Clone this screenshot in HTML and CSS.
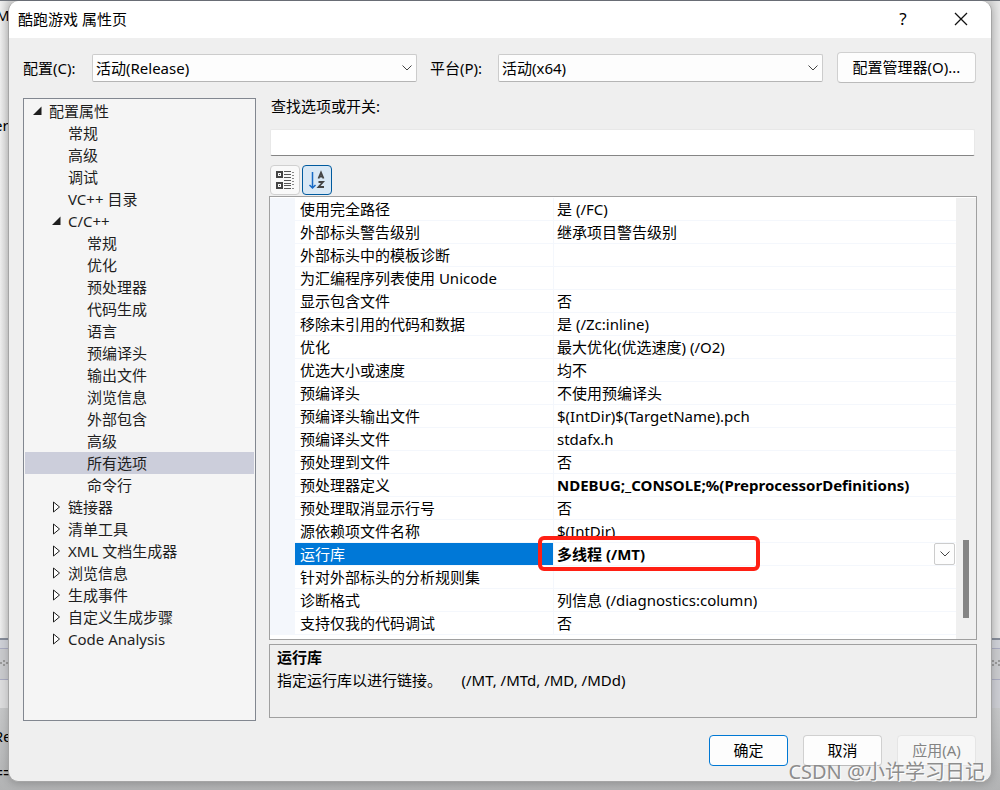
FILE: index.html
```html
<!DOCTYPE html>
<html lang="zh-CN">
<head>
    <meta charset="UTF-8">
    <meta name="viewport" content="width=device-width, initial-scale=1.0">
    <title>酷跑游戏 属性页</title>
    <link rel="stylesheet" href="styles.css">
</head>
<body>
    <!-- IDE window behind the dialog -->
    <div class="backdrop" aria-hidden="true">
        <div class="backdrop-editor"><span class="line-m">M</span><span>er</span></div>
        <div class="backdrop-tabs"></div>
        <div class="backdrop-grip">
            <svg width="9" height="8" viewBox="0 0 9 8"><path d="M0 3h2v2H0zM3 1h2v2H3zM3 5h2v2H3zM6 3h2v2H6z"/></svg>
            <svg width="9" height="8" viewBox="0 0 9 8"><path d="M1 1h2v2H1zM1 5h2v2H1zM4 3h2v2H4zM7 1h2v2H7zM7 5h2v2H7z"/></svg>
        </div>
        <div class="backdrop-bar"></div>
        <div class="backdrop-output"><span>Re</span><span>==</span></div>
    </div>

    <div class="dialog" role="dialog" aria-labelledby="dialog-title">
        <header class="title-bar">
            <h1 id="dialog-title">酷跑游戏 属性页</h1>
            <button class="title-btn help" aria-label="帮助">?</button>
            <button class="title-btn" aria-label="关闭">
                <svg width="14" height="14" viewBox="0 0 14 14"><path d="M1 1l12 12M13 1L1 13" stroke="#111" stroke-width="1.3" fill="none"/></svg>
            </button>
        </header>

        <div class="config-row">
            <label for="config">配置(C):</label>
            <span class="combo">
                <select id="config"><option>活动(Release)</option></select>
                <svg class="chevron" width="10" height="6" viewBox="0 0 10 6"><path d="M.5.5L5 5 9.5.5"/></svg>
            </span>
            <label for="platform">平台(P):</label>
            <span class="combo">
                <select id="platform"><option>活动(x64)</option></select>
                <svg class="chevron" width="10" height="6" viewBox="0 0 10 6"><path d="M.5.5L5 5 9.5.5"/></svg>
            </span>
            <button class="btn manager-btn">配置管理器(O)...</button>
        </div>

        <main class="content">
            <ul class="tree">
                <li class="level-0"><svg class="arrow" viewBox="0 0 9 12"><path class="open" d="M8.5 1.5V10H0z"/></svg>配置属性</li>
                <li class="level-1">常规</li>
                <li class="level-1">高级</li>
                <li class="level-1">调试</li>
                <li class="level-1">VC++ 目录</li>
                <li class="level-1"><svg class="arrow" viewBox="0 0 9 12"><path class="open" d="M8.5 1.5V10H0z"/></svg>C/C++</li>
                <li class="level-2">常规</li>
                <li class="level-2">优化</li>
                <li class="level-2">预处理器</li>
                <li class="level-2">代码生成</li>
                <li class="level-2">语言</li>
                <li class="level-2">预编译头</li>
                <li class="level-2">输出文件</li>
                <li class="level-2">浏览信息</li>
                <li class="level-2">外部包含</li>
                <li class="level-2">高级</li>
                <li class="level-2 selected">所有选项</li>
                <li class="level-2">命令行</li>
                <li class="level-1"><svg class="arrow" viewBox="0 0 9 12"><path class="closed" d="M1.500 1v10L7.500 6z"/></svg>链接器</li>
                <li class="level-1"><svg class="arrow" viewBox="0 0 9 12"><path class="closed" d="M1.500 1v10L7.500 6z"/></svg>清单工具</li>
                <li class="level-1"><svg class="arrow" viewBox="0 0 9 12"><path class="closed" d="M1.500 1v10L7.500 6z"/></svg>XML 文档生成器</li>
                <li class="level-1"><svg class="arrow" viewBox="0 0 9 12"><path class="closed" d="M1.500 1v10L7.500 6z"/></svg>浏览信息</li>
                <li class="level-1"><svg class="arrow" viewBox="0 0 9 12"><path class="closed" d="M1.500 1v10L7.500 6z"/></svg>生成事件</li>
                <li class="level-1"><svg class="arrow" viewBox="0 0 9 12"><path class="closed" d="M1.500 1v10L7.500 6z"/></svg>自定义生成步骤</li>
                <li class="level-1"><svg class="arrow" viewBox="0 0 9 12"><path class="closed" d="M1.500 1v10L7.500 6z"/></svg>Code Analysis</li>
            </ul>

            <section class="options">
                <label class="search-label" for="search">查找选项或开关:</label>
                <input class="search" id="search" type="text">

                <div class="toolbar">
                    <button class="tool-btn" aria-label="按类别">
                        <svg width="20" height="20" viewBox="0 0 20 20" fill="none">
                            <path d="M2 2h5v5H2zM2 13h5v5H2z" stroke="#444" stroke-width="2"/>
                            <path d="M4 4h1v1H4zM4 15h1v1H4z" fill="#444"/>
                            <path d="M9 1.5h7M9 4.500h7M9 7.500h7M9 10.500h7M9 13.500h7M9 15.500h7M9 18.500h7" stroke="#555"/>
                            <path d="M17 2.500h2M17 5.500h2M17 8.500h2M17 11.500h2M17 14.500h2M17 18.500h2" stroke="#888"/>
                        </svg>
                    </button>
                    <button class="tool-btn active" aria-label="按字母顺序">
                        <svg width="20" height="20" viewBox="0 0 20 20" fill="none">
                            <path d="M5.500 2v16M2.500 15l3 3 3-3" stroke="#1668c4" stroke-width="1.500"/>
                            <path d="M11.500 8.500L14 2.500l2.500 6M12.300 6.500h3.400M11.500 12h4.500l-4.500 5h5.500" stroke="#444" stroke-width="1.800"/>
                        </svg>
                    </button>
                </div>

                <div class="grid-box">
                    <table class="property-grid">
                        <tr><th scope="row">使用完全路径</th><td>是 (/FC)</td></tr>
                        <tr><th scope="row">外部标头警告级别</th><td>继承项目警告级别</td></tr>
                        <tr><th scope="row">外部标头中的模板诊断</th><td></td></tr>
                        <tr><th scope="row">为汇编程序列表使用 Unicode</th><td></td></tr>
                        <tr><th scope="row">显示包含文件</th><td>否</td></tr>
                        <tr><th scope="row">移除未引用的代码和数据</th><td>是 (/Zc:inline)</td></tr>
                        <tr><th scope="row">优化</th><td>最大优化(优选速度) (/O2)</td></tr>
                        <tr><th scope="row">优选大小或速度</th><td>均不</td></tr>
                        <tr><th scope="row">预编译头</th><td>不使用预编译头</td></tr>
                        <tr><th scope="row">预编译头输出文件</th><td>$(IntDir)$(TargetName).pch</td></tr>
                        <tr><th scope="row">预编译头文件</th><td>stdafx.h</td></tr>
                        <tr><th scope="row">预处理到文件</th><td>否</td></tr>
                        <tr><th scope="row">预处理器定义</th><td class="modified">NDEBUG;_CONSOLE;%(PreprocessorDefinitions)</td></tr>
                        <tr><th scope="row">预处理取消显示行号</th><td>否</td></tr>
                        <tr><th scope="row">源依赖项文件名称</th><td>$(IntDir)</td></tr>
                        <tr class="current">
                            <th scope="row">运行库</th>
                            <td class="modified">
                                <div class="value-editor">
                                    <span>多线程 (/MT)</span>
                                    <button class="drop-btn" aria-label="展开">
                                        <svg class="chevron" width="10" height="6" viewBox="0 0 10 6"><path d="M.5.5L5 5 9.5.5"/></svg>
                                    </button>
                                </div>
                                <div class="highlight"></div>
                            </td>
                        </tr>
                        <tr><th scope="row">针对外部标头的分析规则集</th><td></td></tr>
                        <tr><th scope="row">诊断格式</th><td>列信息 (/diagnostics:column)</td></tr>
                        <tr><th scope="row">支持仅我的代码调试</th><td>否</td></tr>
                    </table>
                    <div class="scrollbar"><div class="thumb"></div></div>
                </div>

                <div class="description">
                    <h2>运行库</h2>
                    <p>指定运行库以进行链接。 &nbsp; &nbsp; (/MT, /MTd, /MD, /MDd)</p>
                </div>
            </section>
        </main>

        <footer class="actions">
            <button class="btn primary">确定</button>
            <button class="btn">取消</button>
            <button class="btn" disabled>应用(A)</button>
        </footer>
        <div class="watermark">CSDN @小许学习日记</div>
    </div>
</body>
</html>
```

FILE: styles.css
```css
* {
    box-sizing: border-box;
}

body {
    margin: 0;
    min-height: 100vh;
    padding: 1px 8px 8px;
    display: flex;
    position: relative;
    font-family: "Noto Sans", "Noto Sans CJK SC", sans-serif;
    font-size: 15px;
    line-height: 22px;
    color: #000;
    background: #b4b5b6;
}

button,
input,
select {
    font: inherit;
    color: inherit;
    margin: 0;
}

h1,
h2,
p,
ul {
    margin: 0;
    padding: 0;
    font-size: inherit;
    font-weight: normal;
}

/* Window behind the dialog */
.backdrop {
    position: absolute;
    inset: 0;
    overflow: hidden;
    display: flex;
    flex-direction: column;
    border-top: 1px solid #70747c;
}

.backdrop-editor {
    flex: 1;
    display: flex;
    flex-direction: column;
    gap: 88px;
    padding-top: 3px;
    border-bottom: 2px solid #858b98;
    background: linear-gradient(90deg, #eee, #d4d4d4 9px, #d4d4d4 calc(100% - 9px), #e6e6e6);
}

.backdrop-editor .line-m {
    margin-left: -4px;
}

.backdrop-editor span:last-child {
    margin-left: -6px;
}

.backdrop-tabs {
    height: 9px;
    background: #ced0d6;
    border-bottom: 1px solid #a9abc0;
}

.backdrop-grip {
    height: 31px;
    display: flex;
    justify-content: space-between;
    align-items: flex-start;
    padding-top: 10px;
    fill: #999;
    background: #c9cacd;
    border-bottom: 1px solid #a9abc0;
}

.backdrop-bar {
    height: 28px;
    background: linear-gradient(90deg, #dcdcdd 50%, #cbccd2 50%);
}

.backdrop-output {
    height: 82px;
    padding-top: 20px;
    display: flex;
    flex-direction: column;
    gap: 14px;
    font-family: "Liberation Mono", monospace;
    background: linear-gradient(#c6c7c8, #b2b3b4);
}

.backdrop-output span {
    margin-left: -6px;
}

/* Dialog */
.dialog {
    position: relative;
    flex: 1;
    display: flex;
    flex-direction: column;
    padding-bottom: 15px;
    border: 1px solid #a5a5a5;
    border-top: none;
    border-radius: 10px;
    background: #efefef;
    box-shadow: 0 2px 8px rgba(0, 0, 0, 0.2);
}

.title-bar {
    height: 37px;
    display: flex;
    align-items: center;
    padding: 0 1px 2px 9px;
    background: #fff;
    border-radius: 10px 10px 0 0;
}

.title-bar h1 {
    flex: 1;
}

.title-btn {
    width: 58px;
    height: 35px;
    padding: 0;
    border: none;
    background: none;
    display: grid;
    place-items: center;
}

.title-btn.help {
    font-size: 17px;
}

.config-row {
    display: flex;
    align-items: center;
    padding: 14px 15px 0 14px;
}

.config-row label {
    width: 69px;
}

.config-row .combo + label {
    width: 68px;
}

.combo {
    flex: 1;
    display: grid;
    align-items: center;
    margin-right: 13px;
}

.combo select {
    grid-area: 1 / 1;
    width: 100%;
    height: 28px;
    padding: 0 3px;
    appearance: none;
    border: 1px solid #ccc;
    border-bottom-color: #b5b5b5;
    border-radius: 2px;
    background: #fdfdfd;
}

.combo .chevron {
    grid-area: 1 / 1;
    justify-self: end;
    margin-right: 5px;
    pointer-events: none;
}

.chevron path {
    fill: none;
    stroke: #444;
}

.btn {
    width: 79px;
    height: 31px;
    padding: 0 0 2px;
    border: 1px solid #d0d0d0;
    border-bottom-color: #bbb;
    border-radius: 4px;
    background: #fdfdfd;
}

.btn.primary {
    border-color: #0078d4;
}

.btn:disabled {
    color: #838383;
    border-color: #e5e5e5;
    background: #f7f7f7;
}

.manager-btn {
    width: 139px;
    margin-left: 1px;
}

.content {
    flex: 1;
    display: flex;
    gap: 13px;
    padding: 15px 14px 0;
}

/* Category tree */
.tree {
    width: 233px;
    padding: 1px;
    list-style: none;
    color: #1e1e1e;
    border: 1px solid #828790;
    background: #f5f5f5;
}

.tree li {
    height: 22px;
    display: flex;
    align-items: center;
}

.tree .level-0 {
    padding-left: 24px;
}

.tree .level-1 {
    padding-left: 43px;
}

.tree .level-2 {
    padding-left: 62px;
}

.tree .selected {
    background: #cccedb;
}

.arrow {
    width: 9px;
    height: 12px;
    margin-left: -16px;
    margin-right: 7px;
}

.arrow .open {
    fill: #1e1e1e;
}

.arrow .closed {
    fill: #fff;
    stroke: #1e1e1e;
}

/* Right side */
.options {
    flex: 1;
    display: flex;
    flex-direction: column;
    padding-bottom: 3px;
}

.search-label {
    padding-left: 2px;
    line-height: 16px;
    margin-bottom: 15px;
}

.search {
    height: 27px;
    margin: 0 2px 9px 1px;
    border: 1px solid #e8e8e8;
    border-bottom-color: #858585;
    border-radius: 2px;
    background: #fff;
}

.toolbar {
    display: flex;
    gap: 2px;
    padding-left: 1px;
    margin-bottom: 1px;
}

.tool-btn {
    width: 30px;
    height: 30px;
    padding: 0;
    display: grid;
    place-items: center;
    border: 1px solid #d0d0d0;
    border-radius: 4px;
    background: #f9f9f9;
}

.tool-btn.active {
    border-color: #005a9e;
    background: #d9e8f5;
}

.grid-box {
    flex: 1;
    display: flex;
    align-items: flex-start;
    padding-top: 1px;
    border: 1px solid #a0a0a0;
    background: #fff;
}

.property-grid {
    flex: 1;
    table-layout: fixed;
    border-collapse: separate;
    border-spacing: 0;
    border-left: 25px solid #f4f7fc;
}

.property-grid th,
.property-grid td {
    height: 23px;
    padding: 0 0 0 5px;
    border-bottom: 1px solid #f4f7fc;
    text-align: left;
    font-weight: normal;
    white-space: nowrap;
}

.property-grid th {
    width: 258px;
}

.property-grid td {
    padding-left: 3px;
    border-left: 1px solid #f4f7fc;
}

.property-grid .modified {
    font-weight: bold;
}

.property-grid .current th {
    color: #fff;
    background: #0078d7;
    background-clip: padding-box;
}

.property-grid .current td {
    position: relative;
}

.value-editor {
    display: flex;
    justify-content: space-between;
    align-items: center;
}

.drop-btn {
    width: 21px;
    height: 22px;
    padding: 0;
    margin-right: 1px;
    display: grid;
    place-items: center;
    border: 1px solid #ccc;
    border-radius: 2px;
    background: #fdfdfd;
}

/* Red marker around the runtime library value */
.highlight {
    position: absolute;
    left: -16px;
    top: -7px;
    width: 222px;
    height: 35px;
    border: 4px solid #ff2014;
    border-radius: 6px;
}

.scrollbar {
    align-self: stretch;
    width: 20px;
    display: flex;
    flex-direction: column;
    align-items: center;
    justify-content: flex-end;
    padding-bottom: 21px;
    background: #f0f0f0;
}

.thumb {
    width: 6px;
    height: 78px;
    background: #858585;
}

.description {
    height: 74px;
    margin-top: 4px;
    padding: 1px 7px;
    border: 1px solid #a0a0a0;
}

.description h2 {
    font-weight: bold;
    margin-bottom: 1px;
}

.actions {
    display: flex;
    justify-content: flex-end;
    gap: 15px;
    padding: 14px 15px 0;
}

.watermark {
    position: absolute;
    right: 6px;
    bottom: -3px;
    font-size: 20px;
    line-height: 24px;
    color: #8d8d8d;
    text-shadow: 1px 1px 0 #fff;
}
```
